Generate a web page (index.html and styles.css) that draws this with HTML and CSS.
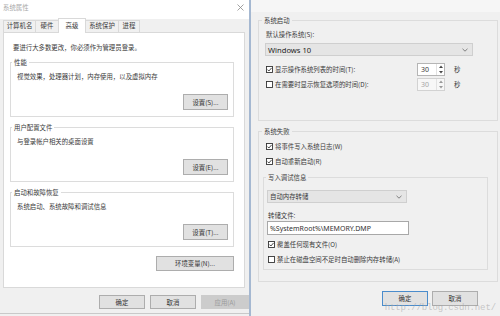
FILE: index.html
```html
<!DOCTYPE html>
<html lang="zh-CN">
<head>
<meta charset="utf-8">
<title>系统属性</title>
<link rel="stylesheet" href="styles.css">
</head>
<body>
<div class="screen">
  <div class="win left">
    <div class="titlebar">
      <span class="wtitle">系统属性</span>
      <svg class="close" width="7" height="7" viewBox="0 0 7 7"><path d="M0.5 0.5L6.5 6.5M6.5 0.5L0.5 6.5" stroke="#8a8a8a" stroke-width="0.8"/></svg>
    </div>
    <div class="tabs">
      <div class="tab t1">计算机名</div>
      <div class="tab t2">硬件</div>
      <div class="tab t3 active">高级</div>
      <div class="tab t4">系统保护</div>
      <div class="tab t5">进程</div>
    </div>
    <div class="panel">
      <div class="note">要进行大多数更改，你必须作为管理员登录。</div>
      <div class="group white">
        <div class="gtitle">性能</div>
        <div class="gtext">视觉效果，处理器计划，内存使用，以及虚拟内存</div>
        <div class="btn set">设置(S)...</div>
      </div>
      <div class="group white">
        <div class="gtitle">用户配置文件</div>
        <div class="gtext">与登录帐户相关的桌面设置</div>
        <div class="btn set">设置(E)...</div>
      </div>
      <div class="group white">
        <div class="gtitle">启动和故障恢复</div>
        <div class="gtext">系统启动、系统故障和调试信息</div>
        <div class="btn set">设置(T)...</div>
      </div>
      <div class="btn env">环境变量(N)...</div>
    </div>
    <div class="footer">
      <div class="btn fbtn">确定</div>
      <div class="btn fbtn">取消</div>
      <div class="btn fbtn wide disabled">应用(A)</div>
    </div>
    <div class="bottomline"></div>
  </div>

  <div class="divider"></div>

  <div class="win right">
    <div class="group gray g-start">
      <div class="gtitle t-start">系统启动</div>
      <div class="label l-os">默认操作系统(S):</div>
      <div class="select s-os"><span class="latin big strong">Windows 10</span>
        <svg width="6" height="4" viewBox="0 0 6 4"><path d="M0.5 0.8L3 3.2L5.5 0.8" fill="none" stroke="#666" stroke-width="0.8"/></svg>
      </div>
      <div class="row r1">
        <svg class="cb" width="7" height="7" viewBox="0 0 7 7"><rect x="0.5" y="0.5" width="6" height="6" fill="#fff" stroke="#333" stroke-width="0.9"/><path d="M1.5 3.6L2.9 5L5.6 1.9" fill="none" stroke="#333" stroke-width="0.9"/></svg>
        <span class="rlabel">显示操作系统列表的时间(T):</span>
        <div class="spin"><span class="latin">30</span>
          <div class="arrows">
            <svg width="4" height="3" viewBox="0 0 4 3"><path d="M0 3L2 0.5L4 3Z" fill="#444"/></svg>
            <svg width="4" height="3" viewBox="0 0 4 3"><path d="M0 0L2 2.5L4 0Z" fill="#444"/></svg>
          </div>
        </div>
        <span class="sec">秒</span>
      </div>
      <div class="row r2">
        <svg class="cb" width="7" height="7" viewBox="0 0 7 7"><rect x="0.5" y="0.5" width="6" height="6" fill="#fff" stroke="#333" stroke-width="0.9"/></svg>
        <span class="rlabel">在需要时显示恢复选项的时间(D):</span>
        <div class="spin off"><span class="latin">30</span>
          <div class="arrows">
            <svg width="4" height="3" viewBox="0 0 4 3"><path d="M0 3L2 0.5L4 3Z" fill="#999"/></svg>
            <svg width="4" height="3" viewBox="0 0 4 3"><path d="M0 0L2 2.5L4 0Z" fill="#999"/></svg>
          </div>
        </div>
        <span class="sec">秒</span>
      </div>
    </div>

    <div class="group gray g-fail">
      <div class="gtitle t-fail">系统失败</div>
      <div class="row r3">
        <svg class="cb" width="7" height="7" viewBox="0 0 7 7"><rect x="0.5" y="0.5" width="6" height="6" fill="#fff" stroke="#333" stroke-width="0.9"/><path d="M1.5 3.6L2.9 5L5.6 1.9" fill="none" stroke="#333" stroke-width="0.9"/></svg>
        <span>将事件写入系统日志(W)</span>
      </div>
      <div class="row r4">
        <svg class="cb" width="7" height="7" viewBox="0 0 7 7"><rect x="0.5" y="0.5" width="6" height="6" fill="#fff" stroke="#333" stroke-width="0.9"/><path d="M1.5 3.6L2.9 5L5.6 1.9" fill="none" stroke="#333" stroke-width="0.9"/></svg>
        <span>自动重新启动(R)</span>
      </div>
      <div class="group gray g-debug">
        <div class="gtitle t-debug">写入调试信息</div>
        <div class="select s-dump"><span>自动内存转储</span>
          <svg width="6" height="4" viewBox="0 0 6 4"><path d="M0.5 0.8L3 3.2L5.5 0.8" fill="none" stroke="#666" stroke-width="0.8"/></svg>
        </div>
        <div class="label l-file">转储文件:</div>
        <div class="input"><span class="latin">%SystemRoot%\MEMORY.DMP</span></div>
        <div class="row r5">
          <svg class="cb" width="7" height="7" viewBox="0 0 7 7"><rect x="0.5" y="0.5" width="6" height="6" fill="#fff" stroke="#333" stroke-width="0.9"/><path d="M1.5 3.6L2.9 5L5.6 1.9" fill="none" stroke="#333" stroke-width="0.9"/></svg>
          <span>覆盖任何现有文件(O)</span>
        </div>
        <div class="row r6">
          <svg class="cb" width="7" height="7" viewBox="0 0 7 7"><rect x="0.5" y="0.5" width="6" height="6" fill="#fff" stroke="#333" stroke-width="0.9"/></svg>
          <span>禁止在磁盘空间不足时自动删除内存转储(A)</span>
        </div>
      </div>
    </div>

    <div class="rfooter">
      <div class="btn rbtn focus">确定</div>
      <div class="btn rbtn">取消</div>
    </div>
    <div class="watermark">http://blog.csdn.net/</div>
  </div>
</div>
</body>
</html>
```
FILE: styles.css
```css
* { box-sizing: border-box; }

body {
  margin: 0;
  width: 500px;
  height: 316px;
  overflow: hidden;
  background: #f0f0f0;
  font-family: "Noto Sans CJK SC", "Noto Sans", sans-serif;
  font-size: 6.4px;
  color: #3a3a3a;
}

.latin { font-family: "Noto Sans", "Noto Sans CJK SC", sans-serif; font-size: 7px; }
.latin.big { font-size: 7.6px; }
.strong { color: #222; }

.screen { display: flex; height: 316px; }

/* ---------- left window ---------- */
.win.left {
  width: 249px;
  background: #f0f0f0;
  display: flex;
  flex-direction: column;
}

.titlebar {
  height: 19px;
  background: #fff;
  display: flex;
  justify-content: space-between;
  align-items: flex-start;
  padding: 3px 5px 0 3px;
}
.wtitle { line-height: 9px; color: #a8a8a8; }
.close { margin-top: 1px; }

.tabs {
  height: 13px;
  display: flex;
  align-items: flex-end;
  padding-left: 3px;
}
.tab {
  height: 12px;
  border: 1px solid #d9d9d9;
  border-bottom: none;
  margin-right: -1px;
  text-align: center;
  line-height: 10px;
  background: #f0f0f0;
  white-space: nowrap;
}
.t1 { width: 33px; }
.t2 { width: 24px; }
.t3 { width: 28px; }
.t4 { width: 34px; }
.t5 { width: 22px; }
.tab.active {
  height: 15px;
  padding-top: 2px;
  background: #fff;
  margin-bottom: -1px;
  position: relative;
  z-index: 1;
}

.panel {
  height: 256px;
  margin: 0 4px 0 3px;
  background: #fff;
  border: 1px solid #d9d9d9;
  display: flex;
  flex-direction: column;
  padding: 10px 10px 0 5px;
}
.note { line-height: 9px; margin-left: 4px; }

.group {
  display: flex;
  flex-direction: column;
  align-items: flex-start;
  border: 1px solid #dcdcdc;
}
.group.white {
  margin: 10px 0 0 1px;
  padding: 0 5px 6px 6px;
  height: 55px;
}
.gtitle {
  line-height: 9px;
  margin-top: -5px;
  padding: 0 2px;
  white-space: nowrap;
}
.white .gtitle { background: #fff; margin-left: -5px; }
.gray .gtitle { background: #f0f0f0; }
.gtext { line-height: 9px; margin-top: 5px; }

.btn {
  height: 16px;
  background: #e1e1e1;
  border: 1px solid #adadad;
  display: flex;
  align-items: center;
  justify-content: center;
  color: #333;
  white-space: nowrap;
}
.btn.set { width: 45px; margin-top: 13px; align-self: flex-end; }
.btn.env { width: 78px; height: 15px; margin-top: 9px; align-self: flex-end; }

.footer {
  display: flex;
  justify-content: flex-end;
  gap: 5px;
  padding: 7px 0 0 0;
}
.fbtn { width: 46px; height: 14px; }
.fbtn.wide { width: 48px; }
.btn.disabled { background: #cccccc; border-color: #cccccc; color: #9a9a9a; }
.bottomline {
  margin-top: 4px;
  height: 1px;
  background: #c9c9c9;
}

.divider { width: 2px; background: #a5b8d1; }

/* ---------- right window ---------- */
.win.right {
  position: relative;
  flex: 1;
  background: linear-gradient(#f6f6f6 0, #f6f6f6 12px, #f0f0f0 12px);
  padding: 20px 2px 0 7px;
  display: flex;
  flex-direction: column;
}

.g-start { padding: 0 8px 29px 6px; }
.t-start { margin-left: -3px; }
.label { line-height: 9px; }
.l-os { margin-top: 5px; margin-left: 1px; }

.select {
  height: 13px;
  background: #e5e5e5;
  border: 1px solid #cfcfcf;
  display: flex;
  align-items: center;
  justify-content: space-between;
  padding: 0 4px 0 2px;
}
.s-os { width: 208px; margin-top: 4px; }
.s-dump { width: 140px; margin-top: 8px; margin-left: -1px; }

.row {
  display: flex;
  align-items: center;
  line-height: 9px;
  white-space: nowrap;
}
.cb { flex: none; margin-right: 2px; }
.r1, .r2 { height: 13px; padding-left: 1px; }
.r1 { margin-top: 7px; }
.r2 { margin-top: 2px; }
.rlabel { width: 142px; }
.spin {
  width: 28px;
  height: 13px;
  background: #fff;
  border: 1px solid #b5b5b5;
  display: flex;
  align-items: center;
  justify-content: space-between;
  padding-left: 3px;
}
.spin.off { border-color: #d2d2d2; color: #a5a5a5; background: #f7f7f7; }
.arrows {
  width: 8px;
  height: 100%;
  display: flex;
  flex-direction: column;
  align-items: center;
  justify-content: space-around;
  border-left: 1px solid #e2e2e2;
}
.sec { margin-left: 9px; }

.g-fail { margin-top: 10px; padding: 0 9px 11px 4px; align-items: stretch; }
.t-fail { margin-left: -1px; align-self: flex-start; }
.r3, .r4 { padding-left: 3px; margin-top: 6px; }

.g-debug { margin-top: 11px; padding: 0 4px 5px 4px; }
.t-debug { margin-left: -2px; }
.l-file { margin-top: 8px; }
.input {
  width: 142px;
  height: 14px;
  margin-top: 1px;
  margin-left: -1px;
  background: #fff;
  border: 1px solid #a8a8a8;
  display: flex;
  align-items: center;
  padding-left: 2px;
  color: #333;
}
.r5 { margin-top: 5px; }
.r6 { margin-top: 6px; }

.rfooter {
  display: flex;
  justify-content: flex-end;
  gap: 4px;
  padding-right: 20px;
  margin-top: 9px;
}
.rbtn { width: 46px; height: 15px; }
.rbtn.focus { border-color: #4a8ccc; }

.watermark {
  position: absolute;
  right: 4px;
  bottom: 3px;
  font-family: "Liberation Mono", monospace;
  font-size: 9px;
  color: rgba(160, 160, 160, 0.55);
  letter-spacing: -0.1px;
}
```
